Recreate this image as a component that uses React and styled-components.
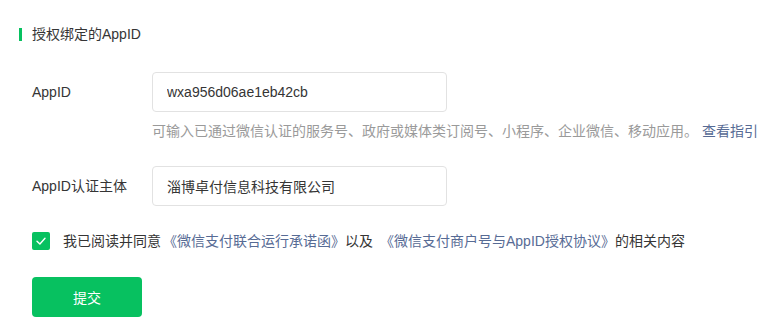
import React, { useState } from 'react';
import styled, { createGlobalStyle } from 'styled-components';

const GlobalStyle = createGlobalStyle`
  body {
    margin: 0;
    background: #fff;
    font-family: "Liberation Sans", "Noto Sans CJK SC", sans-serif;
    font-size: 14px;
    color: #353535;
  }
`;

const Page = styled.div`
  padding: 24px 0 0 19px;
`;

const SectionTitle = styled.div`
  display: flex;
  align-items: center;
  height: 20px;
  line-height: 20px;

  &::before {
    content: '';
    width: 3px;
    height: 13px;
    background: #07c160;
    margin-right: 10px;
  }
`;

const Form = styled.div`
  padding: 28px 0 0 13px;
`;

const Row = styled.div`
  display: flex;
  align-items: center;
  margin-top: ${({top}) => top || 0}px;
`;

const Label = styled.div`
  width: 120px;
  line-height: 20px;
`;

const Input = styled.input`
  box-sizing: border-box;
  width: 295px;
  height: 40px;
  padding: 0 14px;
  border: 1px solid #e2e2e2;
  border-radius: 4px;
  font: inherit;
  color: #353535;
  outline: none;

  &:focus {
    border-color: #07c160;
  }
`;

const Hint = styled.div`
  margin: 9px 0 0 120px;
  line-height: 20px;
  color: #9a9a9a;
  white-space: nowrap;
`;

const Link = styled.a`
  color: #576b95;
  text-decoration: none;
  cursor: pointer;
  margin-left: ${({gap}) => gap || 0}px;
`;

const Agree = styled.label`
  display: flex;
  align-items: center;
  margin-top: 25px;
  line-height: 20px;
  cursor: pointer;
  white-space: nowrap;
`;

const Box = styled.span`
  width: 18px;
  height: 18px;
  border-radius: 2px;
  margin-right: 13px;
  display: flex;
  align-items: center;
  justify-content: center;
  background: ${({checked}) => (checked ? '#07c160' : '#fff')};
  border: ${({checked}) => (checked ? 'none' : '1px solid #d0d0d0')};
  box-sizing: border-box;
`;

const Submit = styled.button`
  margin-top: 26px;
  width: 110px;
  height: 40px;
  border: none;
  border-radius: 4px;
  background: #07c160;
  color: #fff;
  font: inherit;
  cursor: pointer;
`;

export default function App() {
    const [checked, setChecked] = useState(true);

    return (
        <Page>
            <GlobalStyle/>
            <SectionTitle>授权绑定的AppID</SectionTitle>
            <Form>
                <Row>
                    <Label>AppID</Label>
                    <Input defaultValue="wxa956d06ae1eb42cb"/>
                </Row>
                <Hint>
                    可输入已通过微信认证的服务号、政府或媒体类订阅号、小程序、企业微信、移动应用。
                    <Link gap={4}>查看指引</Link>
                </Hint>
                <Row top={25}>
                    <Label>AppID认证主体</Label>
                    <Input defaultValue="淄博卓付信息科技有限公司"/>
                </Row>
                <Agree onClick={() => setChecked(!checked)}>
                    <Box checked={checked}>
                        {checked && (
                            <svg width="12" height="12" viewBox="0 0 12 12">
                                <path d="M2 6.2 L4.9 9 L10 3.2" fill="none" stroke="#fff" strokeWidth="1.4"
                                      strokeLinecap="round" strokeLinejoin="round"/>
                            </svg>
                        )}
                    </Box>
                    我已阅读并同意<Link gap={2}>《微信支付联合运行承诺函》</Link>以及<Link gap={7}>《微信支付商户号与AppID授权协议》</Link>的相关内容
                </Agree>
                <Submit>提交</Submit>
            </Form>
        </Page>
    );
}
